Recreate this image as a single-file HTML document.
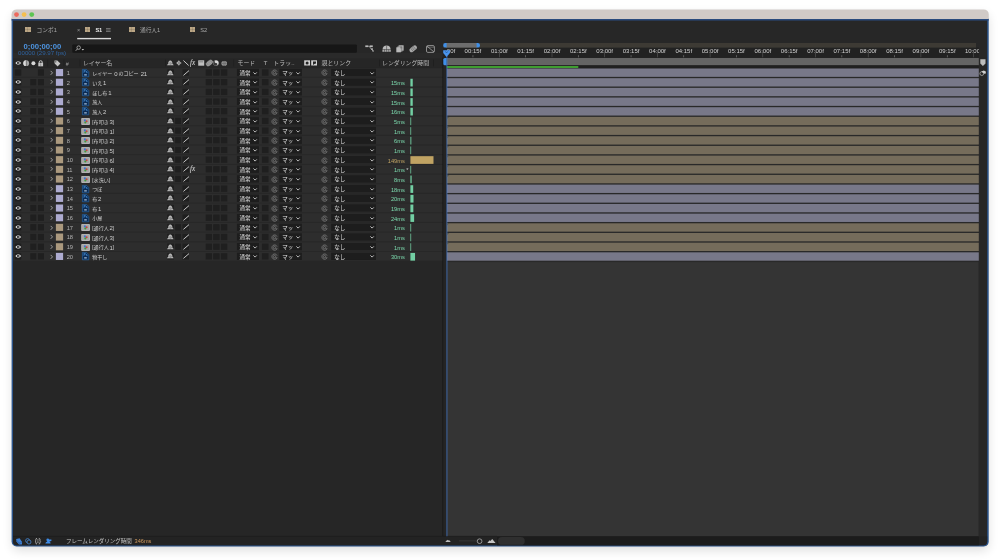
<!DOCTYPE html><html lang="ja"><head><meta charset="utf-8"><title>Timeline</title><style>html,body{margin:0;padding:0;background:#fff;width:1000px;height:560px;overflow:hidden}
body{font-family:"Liberation Sans","Noto Sans CJK JP",sans-serif;position:relative}
#frame{left:13px;top:11px;width:975px;height:535px;background:#232323;border-radius:4px;box-shadow:0 4px 11px rgba(0,0,0,.14),0 0 2px rgba(0,0,0,.18)}
#win{position:absolute;left:0;top:0;width:1000px;height:560px;will-change:transform}
#win *{position:absolute}
i{display:block}
.ic{overflow:visible}
.ly{pointer-events:none}
.t{white-space:nowrap;font-size:5.5px;line-height:9.6px;color:#c4c4c4}
.row{left:13px;width:429px;height:8.75px;background:#2d2d2d}
.bx{background:#1f1f1f}
.dd{background:#1d1d1d}
.lab{width:7.2px;height:7.1px}
.num{color:#b4b4b4;font-size:5.7px;margin-top:0.75px;letter-spacing:-0.2px}
.nm{color:#cfcfcf;font-size:5.05px;margin-top:1.1px;word-spacing:-0.2px;font-weight:400}
#win .nm b{font-weight:normal;font-size:6px;margin-left:0.8px;position:static;vertical-align:-0.4px;letter-spacing:-0.3px}
.dt{color:#e0e0e0;font-size:5.5px;margin-top:0.75px}
.rt{font-size:5.7px;margin-top:1.5px}
.rb{height:7.7px}
.lb{left:446.9px;width:531.9px;height:8.35px}
.nick{left:446.9px;width:0;height:0;border-top:2px solid #55503f;border-right:2px solid transparent}
.rl{font-size:6px;color:#d2d2d2;line-height:9.6px;margin-top:0.5px}
.sq{width:5.4px;height:5.2px;background:#bba685;background-image:linear-gradient(90deg,transparent 2.4px,rgba(0,0,0,.1) 2.4px,rgba(0,0,0,.1) 3px,transparent 3px),linear-gradient(0deg,transparent 2.3px,rgba(0,0,0,.1) 2.3px,rgba(0,0,0,.1) 2.9px,transparent 2.9px)}
.tb{font-size:5.7px;color:#a9a9a9;margin-top:0.6px}
.ta{color:#e8e8e8;font-weight:bold;letter-spacing:-0.35px}
.tc{font-size:7.7px;font-weight:bold;color:#4d94e0;line-height:10px}
.tc2{font-size:6.12px;color:#2f63a0;line-height:9.6px}
.hd{font-size:5.9px;color:#bcbcbc;margin-top:1.2px}
</style></head><body>
<svg width="0" height="0" style="position:absolute">
<defs>
<g id="eye"><path d="M0.3 3 Q3.25 -0.6 6.2 3 Q3.25 6.6 0.3 3Z" fill="#e9e9e9"/><circle cx="3.25" cy="3" r="1.25" fill="#222"/><circle cx="3.25" cy="3" r="0.5" fill="#bbb"/></g>
<g id="chev"><path d="M0.7 0.9 L2.5 2.85 L0.7 4.8" fill="none" stroke="#a2a2a2" stroke-width="0.95"/></g>
<g id="dn"><path d="M0.4 0.4 L2.1 2.1 L3.8 0.4" fill="none" stroke="#cdcdcd" stroke-width="0.9"/></g>
<g id="ps"><path d="M0.4 0.4 H4.6 L6.8 2.6 V7.8 H0.4Z" fill="#0c2c55" stroke="#2a6fb5" stroke-width="0.6"/><text x="1.5" y="4.1" font-family="Liberation Sans,sans-serif" font-weight="bold" font-size="3.4" fill="#4c97de">Ps</text><rect x="2.2" y="5.4" width="2.6" height="1" fill="#c5dcf2"/></g>
<g id="pc"><rect x="0.2" y="0.9" width="8.8" height="7.1" rx="0.9" fill="#b6b6b6"/><rect x="1.1" y="1.7" width="7" height="5.5" fill="#a6a6a6"/><circle cx="3.9" cy="3.4" r="1.05" fill="#3f74d6"/><circle cx="5.6" cy="4.3" r="1.05" fill="#c8443a"/><circle cx="4.3" cy="5.5" r="1.05" fill="#3f9d3f"/></g>
<g id="shy"><path d="M0.1 5.3 H6.5 V4.7 L5.5 4.1 Q5.3 0.5 3.3 0.4 Q1.3 0.5 1.1 4.1 L0.1 4.7Z" fill="#c2c2c2"/><path d="M3.3 2.4 V5.6 M2 3 V4.4 M4.6 3 V4.4" stroke="#444" stroke-width="0.45"/><path d="M1.6 2.2 H5" stroke="#777" stroke-width="0.4"/></g>
<g id="slash"><path d="M0.4 5.4 L6 0.6" stroke="#c4c4c4" stroke-width="1"/></g>
<g id="fx"><text x="0" y="5.2" font-family="Liberation Serif,serif" font-style="italic" font-size="7.2" fill="#e0e0e0">fx</text></g>
<g id="whip"><path d="M6.05 2.6 A2.65 2.65 0 1 0 6.1 4.5" fill="none" stroke="#8c8c8c" stroke-width="0.65"/><path d="M6.1 4.5 Q5.3 5.1 4.7 4.3" fill="none" stroke="#8c8c8c" stroke-width="0.6"/><circle cx="3.5" cy="3.6" r="1.15" fill="none" stroke="#8c8c8c" stroke-width="0.6"/></g>
</defs>
</svg>

<div id="win">
<div id="frame"></div>
<svg class="ly" width="1000" height="560" style="left:0;top:0"><path d="M11.6 18.5 H988.7 V541.4 A5 5 0 0 1 983.7 546.4 H16.6 A5 5 0 0 1 11.6 541.4Z" fill="#2c558c"/><path d="M11.6 19.1 V14.4 A5 5 0 0 1 16.6 9.4 H983.7 A5 5 0 0 1 988.7 14.4 V19.1Z" fill="#d0cac7"/><rect x="11.6" y="19.1" width="977.1" height="1.5" fill="#2a4a7c"/><path d="M13.05 20.5 H987.2 V541.6 A3.7 3.7 0 0 1 983.5 545.3 H16.75 A3.7 3.7 0 0 1 13.05 541.6Z" fill="#272727"/><circle cx="16.5" cy="14.55" r="2.4" fill="#ed6a5e"/><circle cx="24.1" cy="14.55" r="2.4" fill="#f5bf4f"/><circle cx="31.75" cy="14.55" r="2.4" fill="#5dc552"/></svg>
<svg class="ly" width="1000" height="560" style="left:0;top:0">
<rect x="13" y="52.8" width="429" height="6" fill="#2a2a2a"/>
<rect x="13" y="58.8" width="429" height="9" fill="#262626"/>
<rect x="13" y="261.6" width="429" height="274.7" fill="#262626"/>
<rect x="442.2" y="57.6" width="4.4" height="478.7" fill="#242424"/>
<rect x="442.2" y="57.6" width="1" height="478.7" fill="#1c1c1c"/>
<rect x="446.6" y="57.5" width="532.2" height="478.8" fill="#343434"/>
<rect x="978.8" y="57.5" width="8.2" height="478.8" fill="#272727"/>
<rect x="446.6" y="68" width="532.2" height="194.1" fill="#292929"/>
<rect x="443.3" y="47.6" width="535.5" height="10.2" fill="#222222"/>
<rect x="443.3" y="43" width="532.7" height="4.6" fill="#3d3a34"/>
<rect x="446" y="43" width="31" height="4.6" fill="#6d6d6d"/>
<path d="M446.6 43 V47.6 H445.4 A2.2 2.2 0 0 1 443.2 45.4 V45.2 A2.2 2.2 0 0 1 445.4 43Z" fill="#3f8fe8"/>
<path d="M476.6 43 V47.6 H477.8 A2.2 2.2 0 0 0 480 45.4 V45.2 A2.2 2.2 0 0 0 477.8 43Z" fill="#3f8fe8"/>
<rect x="446.6" y="58" width="532.2" height="7.3" fill="#646464"/>
<rect x="446.6" y="65.3" width="532.2" height="3" fill="#202020"/>
<rect x="446.8" y="66" width="131.5" height="2" fill="#3f9d31"/>
</svg>
<span class="t rl" style="left:446.80px;top:46.9px">00f</span>
<span class="t rl" style="left:457.95px;top:46.9px;width:30px;text-align:center">00:15f</span>
<svg class="ly" width="1000" height="560" style="left:0;top:0">
<rect x="472.65" y="55.2" width="0.6" height="2.1" fill="#858585"/>
</svg>
<span class="t rl" style="left:484.30px;top:46.9px;width:30px;text-align:center">01:00f</span>
<svg class="ly" width="1000" height="560" style="left:0;top:0">
<rect x="499.00" y="50.6" width="0.6" height="6.7" fill="#5c5c5c"/>
</svg>
<span class="t rl" style="left:510.65px;top:46.9px;width:30px;text-align:center">01:15f</span>
<svg class="ly" width="1000" height="560" style="left:0;top:0">
<rect x="525.35" y="55.2" width="0.6" height="2.1" fill="#858585"/>
</svg>
<span class="t rl" style="left:537.00px;top:46.9px;width:30px;text-align:center">02:00f</span>
<svg class="ly" width="1000" height="560" style="left:0;top:0">
<rect x="551.70" y="50.6" width="0.6" height="6.7" fill="#5c5c5c"/>
</svg>
<span class="t rl" style="left:563.35px;top:46.9px;width:30px;text-align:center">02:15f</span>
<svg class="ly" width="1000" height="560" style="left:0;top:0">
<rect x="578.05" y="55.2" width="0.6" height="2.1" fill="#858585"/>
</svg>
<span class="t rl" style="left:589.70px;top:46.9px;width:30px;text-align:center">03:00f</span>
<svg class="ly" width="1000" height="560" style="left:0;top:0">
<rect x="604.40" y="50.6" width="0.6" height="6.7" fill="#5c5c5c"/>
</svg>
<span class="t rl" style="left:616.05px;top:46.9px;width:30px;text-align:center">03:15f</span>
<svg class="ly" width="1000" height="560" style="left:0;top:0">
<rect x="630.75" y="55.2" width="0.6" height="2.1" fill="#858585"/>
</svg>
<span class="t rl" style="left:642.40px;top:46.9px;width:30px;text-align:center">04:00f</span>
<svg class="ly" width="1000" height="560" style="left:0;top:0">
<rect x="657.10" y="50.6" width="0.6" height="6.7" fill="#5c5c5c"/>
</svg>
<span class="t rl" style="left:668.75px;top:46.9px;width:30px;text-align:center">04:15f</span>
<svg class="ly" width="1000" height="560" style="left:0;top:0">
<rect x="683.45" y="55.2" width="0.6" height="2.1" fill="#858585"/>
</svg>
<span class="t rl" style="left:695.10px;top:46.9px;width:30px;text-align:center">05:00f</span>
<svg class="ly" width="1000" height="560" style="left:0;top:0">
<rect x="709.80" y="50.6" width="0.6" height="6.7" fill="#5c5c5c"/>
</svg>
<span class="t rl" style="left:721.45px;top:46.9px;width:30px;text-align:center">05:15f</span>
<svg class="ly" width="1000" height="560" style="left:0;top:0">
<rect x="736.15" y="55.2" width="0.6" height="2.1" fill="#858585"/>
</svg>
<span class="t rl" style="left:747.80px;top:46.9px;width:30px;text-align:center">06:00f</span>
<svg class="ly" width="1000" height="560" style="left:0;top:0">
<rect x="762.50" y="50.6" width="0.6" height="6.7" fill="#5c5c5c"/>
</svg>
<span class="t rl" style="left:774.15px;top:46.9px;width:30px;text-align:center">06:15f</span>
<svg class="ly" width="1000" height="560" style="left:0;top:0">
<rect x="788.85" y="55.2" width="0.6" height="2.1" fill="#858585"/>
</svg>
<span class="t rl" style="left:800.50px;top:46.9px;width:30px;text-align:center">07:00f</span>
<svg class="ly" width="1000" height="560" style="left:0;top:0">
<rect x="815.20" y="50.6" width="0.6" height="6.7" fill="#5c5c5c"/>
</svg>
<span class="t rl" style="left:826.85px;top:46.9px;width:30px;text-align:center">07:15f</span>
<svg class="ly" width="1000" height="560" style="left:0;top:0">
<rect x="841.55" y="55.2" width="0.6" height="2.1" fill="#858585"/>
</svg>
<span class="t rl" style="left:853.20px;top:46.9px;width:30px;text-align:center">08:00f</span>
<svg class="ly" width="1000" height="560" style="left:0;top:0">
<rect x="867.90" y="50.6" width="0.6" height="6.7" fill="#5c5c5c"/>
</svg>
<span class="t rl" style="left:879.55px;top:46.9px;width:30px;text-align:center">08:15f</span>
<svg class="ly" width="1000" height="560" style="left:0;top:0">
<rect x="894.25" y="55.2" width="0.6" height="2.1" fill="#858585"/>
</svg>
<span class="t rl" style="left:905.90px;top:46.9px;width:30px;text-align:center">09:00f</span>
<svg class="ly" width="1000" height="560" style="left:0;top:0">
<rect x="920.60" y="50.6" width="0.6" height="6.7" fill="#5c5c5c"/>
</svg>
<span class="t rl" style="left:932.25px;top:46.9px;width:30px;text-align:center">09:15f</span>
<svg class="ly" width="1000" height="560" style="left:0;top:0">
<rect x="946.95" y="55.2" width="0.6" height="2.1" fill="#858585"/>
</svg>
<span class="t rl" style="left:965.00px;top:46.9px;width:13.6px;overflow:hidden">10:00f</span>
<svg class="ly" width="1000" height="560" style="left:0;top:0">
<rect x="973.30" y="50.6" width="0.6" height="6.7" fill="#5c5c5c"/>
<path d="M13.05 536.4 H987.2 V541.6 A3.7 3.7 0 0 1 983.5 545.3 H16.75 A3.7 3.7 0 0 1 13.05 541.6Z" fill="#232323"/>
<rect x="497" y="536.4" width="481.8" height="8.9" fill="#1c1c1c"/>
<rect x="498" y="537" width="26.8" height="7.8" fill="#2f2f2f" rx="3.9"/>
<rect x="13" y="535.9" width="484" height="0.7" fill="#1b1b1b"/>
<rect x="72.3" y="44.4" width="284.6" height="8.3" fill="#161616" rx="1"/>
</svg>
<svg class="ic" style="left:74.8px;top:45.1px" width="10" height="7"><circle cx="3.7" cy="2.6" r="1.75" fill="none" stroke="#c9c9c9" stroke-width="0.7"/><path d="M2.5 3.9 L0.8 5.7" stroke="#c9c9c9" stroke-width="0.85"/><path d="M6.6 4 h2.5 l-1.25 1.5z" fill="#c9c9c9"/></svg>
<i class="sq" style="left:25.2px;top:27px"></i>
<span class="t tb" style="left:36.6px;top:25.3px">コンポ1</span>
<span class="t tb" style="left:76.9px;top:25.2px;color:#999;font-size:5.5px">×</span>
<i class="sq" style="left:84.7px;top:27px"></i>
<span class="t tb ta" style="left:95.5px;top:25.3px">S1</span>
<svg class="ic" style="left:106px;top:28.4px" width="5" height="4.4"><path d="M0 0.5h4.6M0 2h4.6M0 3.5h4.6" stroke="#8d8d8d" stroke-width="0.7"/></svg>
<svg class="ly" width="1000" height="560" style="left:0;top:0">
<rect x="77.2" y="37.9" width="33.8" height="1.4" fill="#dcdcdc"/>
</svg>
<i class="sq" style="left:129.2px;top:27px"></i>
<span class="t tb" style="left:140px;top:25.3px">通行人1</span>
<i class="sq" style="left:189.8px;top:27px"></i>
<span class="t tb" style="left:200.3px;top:25.3px">S2</span>
<span class="t tc" style="left:23.6px;top:41.5px">0;00;00;00</span>
<span class="t tc2" style="left:18.1px;top:48.3px">00000 (29.97 fps)</span>
<svg class="ic" style="left:365px;top:45.4px" width="9.4" height="7.4"><rect x="0.3" y="0.4" width="2.8" height="1.7" fill="#b9b9b9"/><rect x="5" y="0.4" width="2.8" height="1.7" fill="#b9b9b9"/><path d="M3 1.2H5M4 1.2 L6.4 4.2 H7 M6.6 4.3 L8 6" stroke="#b9b9b9" stroke-width="0.7" fill="none"/><rect x="6.2" y="3.4" width="1.8" height="1.4" fill="#b9b9b9"/><rect x="7.4" y="5.4" width="1.4" height="1.2" fill="#b9b9b9"/></svg>
<svg class="ic" style="left:382px;top:45.4px" width="9.4" height="7.4"><path d="M0.5 4.4 Q0.8 0.7 4.6 0.5 Q8.4 0.7 8.7 4.4Z" fill="#b9b9b9"/><path d="M0.4 4.9 H8.8 V6.8 H0.4Z" fill="#a8a8a8"/><path d="M4.6 0.6V6.8M2.5 4.4V6.8M6.7 4.4V6.8" stroke="#333" stroke-width="0.5"/></svg>
<svg class="ic" style="left:396px;top:45.4px" width="8" height="7.6"><rect x="2.6" y="0.3" width="5" height="5.4" fill="#bcbcbc"/><rect x="1.4" y="1.3" width="5" height="5.4" fill="#8f8f8f"/><rect x="0.3" y="2.3" width="4.6" height="5" fill="#b9b9b9"/><rect x="4.4" y="1.6" width="1.8" height="1.8" fill="#777"/></svg>
<svg class="ic" style="left:409px;top:45.4px" width="8.4" height="7.6"><g transform="rotate(-38 4.2 3.8)"><rect x="0" y="1.6" width="8.4" height="4.4" rx="2.2" fill="#a8a8a8"/><path d="M2.6 1.6V6M4.2 1.6V6M5.8 1.6V6" stroke="#555" stroke-width="0.5"/></g></svg>
<svg class="ic" style="left:426.2px;top:45px" width="9.4" height="8"><rect x="0.5" y="0.6" width="7.9" height="6.8" rx="1.3" fill="none" stroke="#9a9a9a" stroke-width="0.9"/><path d="M1 1.1 L8 7" stroke="#9a9a9a" stroke-width="0.9"/><path d="M1 2.2H8" stroke="#9a9a9a" stroke-width="0.5"/></svg>
<svg class="ic" style="left:15.3px;top:60.0px" width="6.5" height="6"><use href="#eye"/></svg>
<svg class="ic" style="left:22.6px;top:60.0px" width="6.5" height="6.4"><circle cx="3.2" cy="3.2" r="2.9" fill="#a5a5a5"/><path d="M3.2 0.3 A2.9 2.9 0 0 0 3.2 6.1Z" fill="#dadada"/><path d="M3.3 0.4V6" stroke="#555" stroke-width="0.7"/></svg>
<svg class="ic" style="left:30.8px;top:60.0px" width="5" height="6.4"><circle cx="2.4" cy="3.3" r="2" fill="#d6d6d6"/></svg>
<svg class="ic" style="left:38.3px;top:59.8px" width="6" height="7"><rect x="0.3" y="2.8" width="4.8" height="3.5" fill="#c6c6c6"/><path d="M1.2 3V2.2Q1.2 0.7 2.7 0.7Q4.2 0.7 4.2 2.2V3" fill="none" stroke="#c6c6c6" stroke-width="1"/><path d="M2.7 3.4V6" stroke="#666" stroke-width="0.5"/></svg>
<svg class="ic" style="left:53.8px;top:59.7px" width="7.6" height="7.6"><path d="M0.5 0.5 H3.3 L6.4 3.6 L3.6 6.4 L0.5 3.3Z" fill="#c6c6c6"/><circle cx="1.8" cy="1.8" r="0.6" fill="#262626"/></svg>
<span class="t hd" style="left:65.8px;top:58.4px;font-style:italic;font-size:5.2px;color:#9f9f9f">#</span>
<span class="t hd" style="left:82.9px;top:58.3px">レイヤー名</span>
<svg class="ly" width="1000" height="560" style="left:0;top:0">
<rect x="47.4" y="59.6" width="0.7" height="6.8" fill="#1e1e1e"/>
<rect x="63.6" y="59.6" width="0.7" height="6.8" fill="#1e1e1e"/>
<rect x="79.6" y="59.6" width="0.7" height="6.8" fill="#1e1e1e"/>
<rect x="165.2" y="59.6" width="0.7" height="6.8" fill="#1e1e1e"/>
<rect x="233.4" y="59.6" width="0.7" height="6.8" fill="#1e1e1e"/>
<rect x="379.2" y="59.6" width="0.7" height="6.8" fill="#1e1e1e"/>
<rect x="433.2" y="59.6" width="0.7" height="6.8" fill="#1e1e1e"/>
</svg>
<svg class="ic" style="left:167.3px;top:60.0px" width="6.6" height="6"><use href="#shy"/></svg>
<svg class="ic" style="left:175.5px;top:60.0px" width="5.6" height="6"><path d="M2.8 0.4V5.6M0.2 3H5.4" stroke="#cfcfcf" stroke-width="0.6"/><circle cx="2.8" cy="3" r="1.5" fill="none" stroke="#cfcfcf" stroke-width="0.7"/></svg>
<svg class="ic" style="left:182.5px;top:60.0px" width="6.4" height="6"><path d="M0.4 0.5 L5.7 5.5" stroke="#c4c4c4" stroke-width="1"/></svg>
<svg class="ic" style="left:190.3px;top:60.0px" width="6.4" height="6"><use href="#fx"/></svg>
<svg class="ic" style="left:197.6px;top:60.0px" width="6.6" height="6"><rect x="0.2" y="0.3" width="6" height="5.4" fill="#bfbfbf"/><rect x="1.2" y="1.2" width="4" height="1.2" fill="#8a8a8a"/></svg>
<svg class="ic" style="left:205.5px;top:60.0px" width="6.8" height="6"><g transform="rotate(-38 3.4 3)"><rect x="-0.2" y="1" width="7.2" height="4" rx="2" fill="#8c8c8c" stroke="#b5b5b5" stroke-width="0.5"/><path d="M2.2 1V5M3.4 1V5M4.6 1V5" stroke="#b0b0b0" stroke-width="0.4"/></g></svg>
<svg class="ic" style="left:213.2px;top:60.0px" width="6" height="6"><circle cx="3" cy="3" r="2.7" fill="#d6d6d6"/><path d="M3 0.3 A2.7 2.7 0 0 0 3 5.7 A1.35 1.35 0 0 0 3 3 A1.35 1.35 0 0 1 3 0.3" fill="#3a3a3a"/></svg>
<svg class="ic" style="left:220.8px;top:60.0px" width="6" height="6"><ellipse cx="3.2" cy="3.4" rx="2.8" ry="2.3" fill="#a2a2a2"/><path d="M0.4 3.4H6M3.2 1.1V5.7" stroke="#505050" stroke-width="0.45"/><ellipse cx="3.2" cy="3.4" rx="1.3" ry="2.3" fill="none" stroke="#505050" stroke-width="0.4"/></svg>
<span class="t hd" style="left:237.6px;top:58.3px">モード</span>
<span class="t hd" style="left:263.3px;top:58.3px;font-size:5.8px;font-weight:bold;margin-left:0.4px;color:#909090">T</span>
<span class="t hd" style="left:273.2px;top:58.3px;letter-spacing:0.15px">トラッ..</span>
<svg class="ic" style="left:304px;top:60.0px" width="6.2" height="6"><rect x="0.2" y="0.3" width="5.8" height="5.2" fill="#d2d2d2"/><circle cx="3.1" cy="2.9" r="1.5" fill="#262626"/></svg>
<svg class="ic" style="left:311.4px;top:60.0px" width="6.2" height="6"><rect x="0.2" y="0.3" width="5.8" height="5.2" fill="#d2d2d2"/><path d="M2 1.6H5V3.4Q3.2 3.4 2 5Z" fill="#262626"/></svg>
<span class="t hd" style="left:321.6px;top:58.3px">親とリンク</span>
<span class="t hd" style="left:382px;top:58.3px">レンダリング時間</span>
<svg class="ic" style="left:16px;top:537.6px" width="6.4" height="6.8"><path d="M0.2 0.9 L3.6 0.3 L6.1 3.9 L5.9 6.5 L2.9 6.6 L0.4 3.5Z" fill="#3e80d4"/><path d="M0.6 2.2 L3.2 5 L5.8 4.4 M3.2 5 V6.4" stroke="#24508c" stroke-width="0.5" fill="none"/></svg>
<svg class="ic" style="left:25.4px;top:537.6px" width="6.8" height="6.4"><circle cx="2.6" cy="2.6" r="2" fill="none" stroke="#4a90e2" stroke-width="0.7"/><circle cx="4" cy="4" r="2" fill="#232323" stroke="#4a90e2" stroke-width="0.7"/></svg>
<svg class="ic" style="left:35.2px;top:537.8000000000001px" width="5.8" height="6.4"><path d="M2 0.4 Q0.8 0.4 0.8 1.6 V2.6 L0.2 3.2 L0.8 3.8 V4.8 Q0.8 6 2 6 M3.8 0.4 Q5 0.4 5 1.6 V2.6 L5.6 3.2 L5 3.8 V4.8 Q5 6 3.8 6" fill="none" stroke="#c9c9c9" stroke-width="0.8"/><path d="M2.2 1.8H3.6M2.2 3.2H3.6M2.2 4.6H3.6" stroke="#c9c9c9" stroke-width="0.6"/></svg>
<svg class="ic" style="left:44.8px;top:537.6px" width="6.8" height="6.4"><path d="M0.4 5.6 Q0.4 3.6 2.4 3.4 Q1.4 2.8 1.4 1.8 Q1.4 0.5 2.8 0.5 Q4 0.5 4.1 1.6 L6.4 1.4 V3 L4.2 3.4 Q5.6 3.8 5.6 5.6Z" fill="#3e8be6"/></svg>
<span class="t" style="left:66px;top:537px;font-size:5.5px;color:#c4c4c4">フレームレンダリング時間</span>
<span class="t" style="left:134.6px;top:537px;font-size:5.6px;color:#cf9a60">346ms</span>
<svg class="ic" style="left:444.8px;top:538.2px" width="7" height="5"><path d="M0.3 3.9 L2.3 1.7 L3.2 2.6 L4 1.9 L5.8 3.9Z" fill="#bdbdbd"/></svg>
<svg class="ly" width="1000" height="560" style="left:0;top:0">
<rect x="459" y="540.5" width="19" height="0.8" fill="#3a3a3a"/>
<circle cx="479.6" cy="541.2" r="2.35" fill="#232323" stroke="#c0c0c0" stroke-width="0.7"/>
</svg>
<svg class="ic" style="left:486.6px;top:538.2px" width="9" height="6"><path d="M0.3 5 L2.6 2.2 L3.4 3.1 L5.2 1 L8.6 5Z" fill="#c4c4c4"/></svg>
<svg class="ic" style="left:980.4px;top:59px" width="6" height="8"><path d="M0.3 0.3 H5.5 V4.6 L2.9 7 L0.3 4.6Z" fill="#bdbdbd"/></svg>
<svg class="ic" style="left:979.4px;top:69.6px" width="7.6" height="6.4"><circle cx="2.8" cy="3.6" r="1.9" fill="none" stroke="#bdbdbd" stroke-width="0.7"/><path d="M2.4 1.4 L4.8 0.6 L6.8 1.6 V3.6 L5 3.8Z" fill="#cfcfcf"/></svg>
<svg class="ly" width="1000" height="560" style="left:0;top:0">
<rect x="13.05" y="68.10" width="429.20" height="8.75" fill="#2d2d2d"/>
<rect x="14.75" y="69.40" width="6.50" height="6.30" fill="#1f1f1f"/>
<rect x="37.90" y="69.40" width="6.10" height="6.30" fill="#1f1f1f"/>
<rect x="55.90" y="69.05" width="7.20" height="7.10" fill="#adabd0"/>
<rect x="167.30" y="69.40" width="6.60" height="6.30" fill="#1f1f1f"/>
<rect x="182.50" y="69.40" width="6.40" height="6.30" fill="#1f1f1f"/>
<rect x="205.70" y="69.40" width="6.30" height="6.30" fill="#1f1f1f"/>
<rect x="213.20" y="69.40" width="6.40" height="6.30" fill="#1f1f1f"/>
<rect x="220.80" y="69.40" width="6.50" height="6.30" fill="#1f1f1f"/>
<rect x="236.90" y="68.85" width="22.10" height="7.30" fill="#1d1d1d"/>
<rect x="261.90" y="69.40" width="6.60" height="6.30" fill="#1f1f1f"/>
<rect x="279.30" y="68.85" width="22.60" height="7.30" fill="#1d1d1d"/>
<rect x="331.20" y="68.85" width="44.80" height="7.30" fill="#1d1d1d"/>
<rect x="446.90" y="68.50" width="531.90" height="8.35" fill="#787889"/>
<rect x="13.05" y="77.77" width="429.20" height="8.75" fill="#2d2d2d"/>
<rect x="14.75" y="79.07" width="6.50" height="6.30" fill="#1f1f1f"/>
<rect x="30.25" y="79.07" width="6.10" height="6.30" fill="#1f1f1f"/>
<rect x="37.90" y="79.07" width="6.10" height="6.30" fill="#1f1f1f"/>
<rect x="55.90" y="78.72" width="7.20" height="7.10" fill="#adabd0"/>
<rect x="167.30" y="79.07" width="6.60" height="6.30" fill="#1f1f1f"/>
<rect x="182.50" y="79.07" width="6.40" height="6.30" fill="#1f1f1f"/>
<rect x="205.70" y="79.07" width="6.30" height="6.30" fill="#1f1f1f"/>
<rect x="213.20" y="79.07" width="6.40" height="6.30" fill="#1f1f1f"/>
<rect x="220.80" y="79.07" width="6.50" height="6.30" fill="#1f1f1f"/>
<rect x="236.90" y="78.52" width="22.10" height="7.30" fill="#1d1d1d"/>
<rect x="261.90" y="79.07" width="6.60" height="6.30" fill="#1f1f1f"/>
<rect x="279.30" y="78.52" width="22.60" height="7.30" fill="#1d1d1d"/>
<rect x="331.20" y="78.52" width="44.80" height="7.30" fill="#1d1d1d"/>
<rect x="410.40" y="78.77" width="2.33" height="7.70" fill="#72cfa3"/>
<rect x="446.90" y="78.17" width="531.90" height="8.35" fill="#787889"/>
<rect x="13.05" y="87.45" width="429.20" height="8.75" fill="#2d2d2d"/>
<rect x="14.75" y="88.75" width="6.50" height="6.30" fill="#1f1f1f"/>
<rect x="30.25" y="88.75" width="6.10" height="6.30" fill="#1f1f1f"/>
<rect x="37.90" y="88.75" width="6.10" height="6.30" fill="#1f1f1f"/>
<rect x="55.90" y="88.40" width="7.20" height="7.10" fill="#adabd0"/>
<rect x="167.30" y="88.75" width="6.60" height="6.30" fill="#1f1f1f"/>
<rect x="182.50" y="88.75" width="6.40" height="6.30" fill="#1f1f1f"/>
<rect x="205.70" y="88.75" width="6.30" height="6.30" fill="#1f1f1f"/>
<rect x="213.20" y="88.75" width="6.40" height="6.30" fill="#1f1f1f"/>
<rect x="220.80" y="88.75" width="6.50" height="6.30" fill="#1f1f1f"/>
<rect x="236.90" y="88.20" width="22.10" height="7.30" fill="#1d1d1d"/>
<rect x="261.90" y="88.75" width="6.60" height="6.30" fill="#1f1f1f"/>
<rect x="279.30" y="88.20" width="22.60" height="7.30" fill="#1d1d1d"/>
<rect x="331.20" y="88.20" width="44.80" height="7.30" fill="#1d1d1d"/>
<rect x="410.40" y="88.45" width="2.33" height="7.70" fill="#72cfa3"/>
<rect x="446.90" y="87.85" width="531.90" height="8.35" fill="#787889"/>
<rect x="13.05" y="97.12" width="429.20" height="8.75" fill="#2d2d2d"/>
<rect x="14.75" y="98.42" width="6.50" height="6.30" fill="#1f1f1f"/>
<rect x="30.25" y="98.42" width="6.10" height="6.30" fill="#1f1f1f"/>
<rect x="37.90" y="98.42" width="6.10" height="6.30" fill="#1f1f1f"/>
<rect x="55.90" y="98.08" width="7.20" height="7.10" fill="#adabd0"/>
<rect x="167.30" y="98.42" width="6.60" height="6.30" fill="#1f1f1f"/>
<rect x="182.50" y="98.42" width="6.40" height="6.30" fill="#1f1f1f"/>
<rect x="205.70" y="98.42" width="6.30" height="6.30" fill="#1f1f1f"/>
<rect x="213.20" y="98.42" width="6.40" height="6.30" fill="#1f1f1f"/>
<rect x="220.80" y="98.42" width="6.50" height="6.30" fill="#1f1f1f"/>
<rect x="236.90" y="97.88" width="22.10" height="7.30" fill="#1d1d1d"/>
<rect x="261.90" y="98.42" width="6.60" height="6.30" fill="#1f1f1f"/>
<rect x="279.30" y="97.88" width="22.60" height="7.30" fill="#1d1d1d"/>
<rect x="331.20" y="97.88" width="44.80" height="7.30" fill="#1d1d1d"/>
<rect x="410.40" y="98.12" width="2.33" height="7.70" fill="#72cfa3"/>
<rect x="446.90" y="97.53" width="531.90" height="8.35" fill="#787889"/>
<rect x="13.05" y="106.80" width="429.20" height="8.75" fill="#2d2d2d"/>
<rect x="14.75" y="108.10" width="6.50" height="6.30" fill="#1f1f1f"/>
<rect x="30.25" y="108.10" width="6.10" height="6.30" fill="#1f1f1f"/>
<rect x="37.90" y="108.10" width="6.10" height="6.30" fill="#1f1f1f"/>
<rect x="55.90" y="107.75" width="7.20" height="7.10" fill="#adabd0"/>
<rect x="167.30" y="108.10" width="6.60" height="6.30" fill="#1f1f1f"/>
<rect x="182.50" y="108.10" width="6.40" height="6.30" fill="#1f1f1f"/>
<rect x="205.70" y="108.10" width="6.30" height="6.30" fill="#1f1f1f"/>
<rect x="213.20" y="108.10" width="6.40" height="6.30" fill="#1f1f1f"/>
<rect x="220.80" y="108.10" width="6.50" height="6.30" fill="#1f1f1f"/>
<rect x="236.90" y="107.55" width="22.10" height="7.30" fill="#1d1d1d"/>
<rect x="261.90" y="108.10" width="6.60" height="6.30" fill="#1f1f1f"/>
<rect x="279.30" y="107.55" width="22.60" height="7.30" fill="#1d1d1d"/>
<rect x="331.20" y="107.55" width="44.80" height="7.30" fill="#1d1d1d"/>
<rect x="410.40" y="107.80" width="2.48" height="7.70" fill="#72cfa3"/>
<rect x="446.90" y="107.20" width="531.90" height="8.35" fill="#787889"/>
<rect x="13.05" y="116.47" width="429.20" height="8.75" fill="#2d2d2d"/>
<rect x="14.75" y="117.77" width="6.50" height="6.30" fill="#1f1f1f"/>
<rect x="30.25" y="117.77" width="6.10" height="6.30" fill="#1f1f1f"/>
<rect x="37.90" y="117.77" width="6.10" height="6.30" fill="#1f1f1f"/>
<rect x="55.90" y="117.42" width="7.20" height="7.10" fill="#ab997e"/>
<rect x="167.30" y="117.77" width="6.60" height="6.30" fill="#1f1f1f"/>
<rect x="175.20" y="117.77" width="5.80" height="6.30" fill="#1f1f1f"/>
<rect x="182.50" y="117.77" width="6.40" height="6.30" fill="#1f1f1f"/>
<rect x="205.70" y="117.77" width="6.30" height="6.30" fill="#1f1f1f"/>
<rect x="213.20" y="117.77" width="6.40" height="6.30" fill="#1f1f1f"/>
<rect x="220.80" y="117.77" width="6.50" height="6.30" fill="#1f1f1f"/>
<rect x="236.90" y="117.22" width="22.10" height="7.30" fill="#1d1d1d"/>
<rect x="261.90" y="117.77" width="6.60" height="6.30" fill="#1f1f1f"/>
<rect x="279.30" y="117.22" width="22.60" height="7.30" fill="#1d1d1d"/>
<rect x="331.20" y="117.22" width="44.80" height="7.30" fill="#1d1d1d"/>
<rect x="410.40" y="117.47" width="0.78" height="7.70" fill="#72cfa3"/>
<rect x="446.90" y="116.88" width="531.90" height="8.35" fill="#756c5b"/>
<path d="M446.9 116.88 h2.2 l-2.2 2.2z" fill="#55503f"/>
<rect x="13.05" y="126.15" width="429.20" height="8.75" fill="#2d2d2d"/>
<rect x="14.75" y="127.45" width="6.50" height="6.30" fill="#1f1f1f"/>
<rect x="30.25" y="127.45" width="6.10" height="6.30" fill="#1f1f1f"/>
<rect x="37.90" y="127.45" width="6.10" height="6.30" fill="#1f1f1f"/>
<rect x="55.90" y="127.10" width="7.20" height="7.10" fill="#ab997e"/>
<rect x="167.30" y="127.45" width="6.60" height="6.30" fill="#1f1f1f"/>
<rect x="175.20" y="127.45" width="5.80" height="6.30" fill="#1f1f1f"/>
<rect x="182.50" y="127.45" width="6.40" height="6.30" fill="#1f1f1f"/>
<rect x="205.70" y="127.45" width="6.30" height="6.30" fill="#1f1f1f"/>
<rect x="213.20" y="127.45" width="6.40" height="6.30" fill="#1f1f1f"/>
<rect x="220.80" y="127.45" width="6.50" height="6.30" fill="#1f1f1f"/>
<rect x="236.90" y="126.90" width="22.10" height="7.30" fill="#1d1d1d"/>
<rect x="261.90" y="127.45" width="6.60" height="6.30" fill="#1f1f1f"/>
<rect x="279.30" y="126.90" width="22.60" height="7.30" fill="#1d1d1d"/>
<rect x="331.20" y="126.90" width="44.80" height="7.30" fill="#1d1d1d"/>
<rect x="410.40" y="127.15" width="0.75" height="7.70" fill="#72cfa3"/>
<rect x="446.90" y="126.55" width="531.90" height="8.35" fill="#756c5b"/>
<path d="M446.9 126.55 h2.2 l-2.2 2.2z" fill="#55503f"/>
<rect x="13.05" y="135.82" width="429.20" height="8.75" fill="#2d2d2d"/>
<rect x="14.75" y="137.12" width="6.50" height="6.30" fill="#1f1f1f"/>
<rect x="30.25" y="137.12" width="6.10" height="6.30" fill="#1f1f1f"/>
<rect x="37.90" y="137.12" width="6.10" height="6.30" fill="#1f1f1f"/>
<rect x="55.90" y="136.77" width="7.20" height="7.10" fill="#ab997e"/>
<rect x="167.30" y="137.12" width="6.60" height="6.30" fill="#1f1f1f"/>
<rect x="175.20" y="137.12" width="5.80" height="6.30" fill="#1f1f1f"/>
<rect x="182.50" y="137.12" width="6.40" height="6.30" fill="#1f1f1f"/>
<rect x="205.70" y="137.12" width="6.30" height="6.30" fill="#1f1f1f"/>
<rect x="213.20" y="137.12" width="6.40" height="6.30" fill="#1f1f1f"/>
<rect x="220.80" y="137.12" width="6.50" height="6.30" fill="#1f1f1f"/>
<rect x="236.90" y="136.57" width="22.10" height="7.30" fill="#1d1d1d"/>
<rect x="261.90" y="137.12" width="6.60" height="6.30" fill="#1f1f1f"/>
<rect x="279.30" y="136.57" width="22.60" height="7.30" fill="#1d1d1d"/>
<rect x="331.20" y="136.57" width="44.80" height="7.30" fill="#1d1d1d"/>
<rect x="410.40" y="136.82" width="0.93" height="7.70" fill="#72cfa3"/>
<rect x="446.90" y="136.22" width="531.90" height="8.35" fill="#756c5b"/>
<path d="M446.9 136.22 h2.2 l-2.2 2.2z" fill="#55503f"/>
<rect x="13.05" y="145.50" width="429.20" height="8.75" fill="#2d2d2d"/>
<rect x="14.75" y="146.80" width="6.50" height="6.30" fill="#1f1f1f"/>
<rect x="30.25" y="146.80" width="6.10" height="6.30" fill="#1f1f1f"/>
<rect x="37.90" y="146.80" width="6.10" height="6.30" fill="#1f1f1f"/>
<rect x="55.90" y="146.45" width="7.20" height="7.10" fill="#ab997e"/>
<rect x="167.30" y="146.80" width="6.60" height="6.30" fill="#1f1f1f"/>
<rect x="175.20" y="146.80" width="5.80" height="6.30" fill="#1f1f1f"/>
<rect x="182.50" y="146.80" width="6.40" height="6.30" fill="#1f1f1f"/>
<rect x="205.70" y="146.80" width="6.30" height="6.30" fill="#1f1f1f"/>
<rect x="213.20" y="146.80" width="6.40" height="6.30" fill="#1f1f1f"/>
<rect x="220.80" y="146.80" width="6.50" height="6.30" fill="#1f1f1f"/>
<rect x="236.90" y="146.25" width="22.10" height="7.30" fill="#1d1d1d"/>
<rect x="261.90" y="146.80" width="6.60" height="6.30" fill="#1f1f1f"/>
<rect x="279.30" y="146.25" width="22.60" height="7.30" fill="#1d1d1d"/>
<rect x="331.20" y="146.25" width="44.80" height="7.30" fill="#1d1d1d"/>
<rect x="410.40" y="146.50" width="0.75" height="7.70" fill="#72cfa3"/>
<rect x="446.90" y="145.90" width="531.90" height="8.35" fill="#756c5b"/>
<path d="M446.9 145.90 h2.2 l-2.2 2.2z" fill="#55503f"/>
<rect x="13.05" y="155.18" width="429.20" height="8.75" fill="#2d2d2d"/>
<rect x="14.75" y="156.48" width="6.50" height="6.30" fill="#1f1f1f"/>
<rect x="30.25" y="156.48" width="6.10" height="6.30" fill="#1f1f1f"/>
<rect x="37.90" y="156.48" width="6.10" height="6.30" fill="#1f1f1f"/>
<rect x="55.90" y="156.12" width="7.20" height="7.10" fill="#ab997e"/>
<rect x="167.30" y="156.48" width="6.60" height="6.30" fill="#1f1f1f"/>
<rect x="175.20" y="156.48" width="5.80" height="6.30" fill="#1f1f1f"/>
<rect x="182.50" y="156.48" width="6.40" height="6.30" fill="#1f1f1f"/>
<rect x="205.70" y="156.48" width="6.30" height="6.30" fill="#1f1f1f"/>
<rect x="213.20" y="156.48" width="6.40" height="6.30" fill="#1f1f1f"/>
<rect x="220.80" y="156.48" width="6.50" height="6.30" fill="#1f1f1f"/>
<rect x="236.90" y="155.93" width="22.10" height="7.30" fill="#1d1d1d"/>
<rect x="261.90" y="156.48" width="6.60" height="6.30" fill="#1f1f1f"/>
<rect x="279.30" y="155.93" width="22.60" height="7.30" fill="#1d1d1d"/>
<rect x="331.20" y="155.93" width="44.80" height="7.30" fill="#1d1d1d"/>
<rect x="410.40" y="156.18" width="23.09" height="7.70" fill="#c0a363"/>
<rect x="446.90" y="155.58" width="531.90" height="8.35" fill="#756c5b"/>
<path d="M446.9 155.58 h2.2 l-2.2 2.2z" fill="#55503f"/>
<rect x="13.05" y="164.85" width="429.20" height="8.75" fill="#2d2d2d"/>
<rect x="14.75" y="166.15" width="6.50" height="6.30" fill="#1f1f1f"/>
<rect x="30.25" y="166.15" width="6.10" height="6.30" fill="#1f1f1f"/>
<rect x="37.90" y="166.15" width="6.10" height="6.30" fill="#1f1f1f"/>
<rect x="55.90" y="165.80" width="7.20" height="7.10" fill="#ab997e"/>
<rect x="167.30" y="166.15" width="6.60" height="6.30" fill="#1f1f1f"/>
<rect x="175.20" y="166.15" width="5.80" height="6.30" fill="#1f1f1f"/>
<rect x="182.50" y="166.15" width="6.40" height="6.30" fill="#1f1f1f"/>
<rect x="205.70" y="166.15" width="6.30" height="6.30" fill="#1f1f1f"/>
<rect x="213.20" y="166.15" width="6.40" height="6.30" fill="#1f1f1f"/>
<rect x="220.80" y="166.15" width="6.50" height="6.30" fill="#1f1f1f"/>
<rect x="236.90" y="165.60" width="22.10" height="7.30" fill="#1d1d1d"/>
<rect x="261.90" y="166.15" width="6.60" height="6.30" fill="#1f1f1f"/>
<rect x="279.30" y="165.60" width="22.60" height="7.30" fill="#1d1d1d"/>
<rect x="331.20" y="165.60" width="44.80" height="7.30" fill="#1d1d1d"/>
<rect x="410.40" y="165.85" width="0.75" height="7.70" fill="#72cfa3"/>
<rect x="446.90" y="165.25" width="531.90" height="8.35" fill="#756c5b"/>
<path d="M446.9 165.25 h2.2 l-2.2 2.2z" fill="#55503f"/>
<rect x="13.05" y="174.53" width="429.20" height="8.75" fill="#2d2d2d"/>
<rect x="14.75" y="175.83" width="6.50" height="6.30" fill="#1f1f1f"/>
<rect x="30.25" y="175.83" width="6.10" height="6.30" fill="#1f1f1f"/>
<rect x="37.90" y="175.83" width="6.10" height="6.30" fill="#1f1f1f"/>
<rect x="55.90" y="175.47" width="7.20" height="7.10" fill="#ab997e"/>
<rect x="167.30" y="175.83" width="6.60" height="6.30" fill="#1f1f1f"/>
<rect x="175.20" y="175.83" width="5.80" height="6.30" fill="#1f1f1f"/>
<rect x="182.50" y="175.83" width="6.40" height="6.30" fill="#1f1f1f"/>
<rect x="205.70" y="175.83" width="6.30" height="6.30" fill="#1f1f1f"/>
<rect x="213.20" y="175.83" width="6.40" height="6.30" fill="#1f1f1f"/>
<rect x="220.80" y="175.83" width="6.50" height="6.30" fill="#1f1f1f"/>
<rect x="236.90" y="175.28" width="22.10" height="7.30" fill="#1d1d1d"/>
<rect x="261.90" y="175.83" width="6.60" height="6.30" fill="#1f1f1f"/>
<rect x="279.30" y="175.28" width="22.60" height="7.30" fill="#1d1d1d"/>
<rect x="331.20" y="175.28" width="44.80" height="7.30" fill="#1d1d1d"/>
<rect x="410.40" y="175.53" width="1.24" height="7.70" fill="#72cfa3"/>
<rect x="446.90" y="174.93" width="531.90" height="8.35" fill="#756c5b"/>
<path d="M446.9 174.93 h2.2 l-2.2 2.2z" fill="#55503f"/>
<rect x="13.05" y="184.20" width="429.20" height="8.75" fill="#2d2d2d"/>
<rect x="14.75" y="185.50" width="6.50" height="6.30" fill="#1f1f1f"/>
<rect x="30.25" y="185.50" width="6.10" height="6.30" fill="#1f1f1f"/>
<rect x="37.90" y="185.50" width="6.10" height="6.30" fill="#1f1f1f"/>
<rect x="55.90" y="185.15" width="7.20" height="7.10" fill="#adabd0"/>
<rect x="167.30" y="185.50" width="6.60" height="6.30" fill="#1f1f1f"/>
<rect x="182.50" y="185.50" width="6.40" height="6.30" fill="#1f1f1f"/>
<rect x="205.70" y="185.50" width="6.30" height="6.30" fill="#1f1f1f"/>
<rect x="213.20" y="185.50" width="6.40" height="6.30" fill="#1f1f1f"/>
<rect x="220.80" y="185.50" width="6.50" height="6.30" fill="#1f1f1f"/>
<rect x="236.90" y="184.95" width="22.10" height="7.30" fill="#1d1d1d"/>
<rect x="261.90" y="185.50" width="6.60" height="6.30" fill="#1f1f1f"/>
<rect x="279.30" y="184.95" width="22.60" height="7.30" fill="#1d1d1d"/>
<rect x="331.20" y="184.95" width="44.80" height="7.30" fill="#1d1d1d"/>
<rect x="410.40" y="185.20" width="2.79" height="7.70" fill="#72cfa3"/>
<rect x="446.90" y="184.60" width="531.90" height="8.35" fill="#787889"/>
<rect x="13.05" y="193.88" width="429.20" height="8.75" fill="#2d2d2d"/>
<rect x="14.75" y="195.18" width="6.50" height="6.30" fill="#1f1f1f"/>
<rect x="30.25" y="195.18" width="6.10" height="6.30" fill="#1f1f1f"/>
<rect x="37.90" y="195.18" width="6.10" height="6.30" fill="#1f1f1f"/>
<rect x="55.90" y="194.82" width="7.20" height="7.10" fill="#adabd0"/>
<rect x="167.30" y="195.18" width="6.60" height="6.30" fill="#1f1f1f"/>
<rect x="182.50" y="195.18" width="6.40" height="6.30" fill="#1f1f1f"/>
<rect x="205.70" y="195.18" width="6.30" height="6.30" fill="#1f1f1f"/>
<rect x="213.20" y="195.18" width="6.40" height="6.30" fill="#1f1f1f"/>
<rect x="220.80" y="195.18" width="6.50" height="6.30" fill="#1f1f1f"/>
<rect x="236.90" y="194.62" width="22.10" height="7.30" fill="#1d1d1d"/>
<rect x="261.90" y="195.18" width="6.60" height="6.30" fill="#1f1f1f"/>
<rect x="279.30" y="194.62" width="22.60" height="7.30" fill="#1d1d1d"/>
<rect x="331.20" y="194.62" width="44.80" height="7.30" fill="#1d1d1d"/>
<rect x="410.40" y="194.88" width="3.10" height="7.70" fill="#72cfa3"/>
<rect x="446.90" y="194.28" width="531.90" height="8.35" fill="#787889"/>
<rect x="13.05" y="203.55" width="429.20" height="8.75" fill="#2d2d2d"/>
<rect x="14.75" y="204.85" width="6.50" height="6.30" fill="#1f1f1f"/>
<rect x="30.25" y="204.85" width="6.10" height="6.30" fill="#1f1f1f"/>
<rect x="37.90" y="204.85" width="6.10" height="6.30" fill="#1f1f1f"/>
<rect x="55.90" y="204.50" width="7.20" height="7.10" fill="#adabd0"/>
<rect x="167.30" y="204.85" width="6.60" height="6.30" fill="#1f1f1f"/>
<rect x="182.50" y="204.85" width="6.40" height="6.30" fill="#1f1f1f"/>
<rect x="205.70" y="204.85" width="6.30" height="6.30" fill="#1f1f1f"/>
<rect x="213.20" y="204.85" width="6.40" height="6.30" fill="#1f1f1f"/>
<rect x="220.80" y="204.85" width="6.50" height="6.30" fill="#1f1f1f"/>
<rect x="236.90" y="204.30" width="22.10" height="7.30" fill="#1d1d1d"/>
<rect x="261.90" y="204.85" width="6.60" height="6.30" fill="#1f1f1f"/>
<rect x="279.30" y="204.30" width="22.60" height="7.30" fill="#1d1d1d"/>
<rect x="331.20" y="204.30" width="44.80" height="7.30" fill="#1d1d1d"/>
<rect x="410.40" y="204.55" width="2.94" height="7.70" fill="#72cfa3"/>
<rect x="446.90" y="203.95" width="531.90" height="8.35" fill="#787889"/>
<rect x="13.05" y="213.22" width="429.20" height="8.75" fill="#2d2d2d"/>
<rect x="14.75" y="214.53" width="6.50" height="6.30" fill="#1f1f1f"/>
<rect x="30.25" y="214.53" width="6.10" height="6.30" fill="#1f1f1f"/>
<rect x="37.90" y="214.53" width="6.10" height="6.30" fill="#1f1f1f"/>
<rect x="55.90" y="214.17" width="7.20" height="7.10" fill="#adabd0"/>
<rect x="167.30" y="214.53" width="6.60" height="6.30" fill="#1f1f1f"/>
<rect x="182.50" y="214.53" width="6.40" height="6.30" fill="#1f1f1f"/>
<rect x="205.70" y="214.53" width="6.30" height="6.30" fill="#1f1f1f"/>
<rect x="213.20" y="214.53" width="6.40" height="6.30" fill="#1f1f1f"/>
<rect x="220.80" y="214.53" width="6.50" height="6.30" fill="#1f1f1f"/>
<rect x="236.90" y="213.97" width="22.10" height="7.30" fill="#1d1d1d"/>
<rect x="261.90" y="214.53" width="6.60" height="6.30" fill="#1f1f1f"/>
<rect x="279.30" y="213.97" width="22.60" height="7.30" fill="#1d1d1d"/>
<rect x="331.20" y="213.97" width="44.80" height="7.30" fill="#1d1d1d"/>
<rect x="410.40" y="214.22" width="3.72" height="7.70" fill="#72cfa3"/>
<rect x="446.90" y="213.62" width="531.90" height="8.35" fill="#787889"/>
<rect x="13.05" y="222.90" width="429.20" height="8.75" fill="#2d2d2d"/>
<rect x="14.75" y="224.20" width="6.50" height="6.30" fill="#1f1f1f"/>
<rect x="30.25" y="224.20" width="6.10" height="6.30" fill="#1f1f1f"/>
<rect x="37.90" y="224.20" width="6.10" height="6.30" fill="#1f1f1f"/>
<rect x="55.90" y="223.85" width="7.20" height="7.10" fill="#ab997e"/>
<rect x="167.30" y="224.20" width="6.60" height="6.30" fill="#1f1f1f"/>
<rect x="175.20" y="224.20" width="5.80" height="6.30" fill="#1f1f1f"/>
<rect x="182.50" y="224.20" width="6.40" height="6.30" fill="#1f1f1f"/>
<rect x="205.70" y="224.20" width="6.30" height="6.30" fill="#1f1f1f"/>
<rect x="213.20" y="224.20" width="6.40" height="6.30" fill="#1f1f1f"/>
<rect x="220.80" y="224.20" width="6.50" height="6.30" fill="#1f1f1f"/>
<rect x="236.90" y="223.65" width="22.10" height="7.30" fill="#1d1d1d"/>
<rect x="261.90" y="224.20" width="6.60" height="6.30" fill="#1f1f1f"/>
<rect x="279.30" y="223.65" width="22.60" height="7.30" fill="#1d1d1d"/>
<rect x="331.20" y="223.65" width="44.80" height="7.30" fill="#1d1d1d"/>
<rect x="410.40" y="223.90" width="0.75" height="7.70" fill="#72cfa3"/>
<rect x="446.90" y="223.30" width="531.90" height="8.35" fill="#756c5b"/>
<path d="M446.9 223.30 h2.2 l-2.2 2.2z" fill="#55503f"/>
<rect x="13.05" y="232.58" width="429.20" height="8.75" fill="#2d2d2d"/>
<rect x="14.75" y="233.88" width="6.50" height="6.30" fill="#1f1f1f"/>
<rect x="30.25" y="233.88" width="6.10" height="6.30" fill="#1f1f1f"/>
<rect x="37.90" y="233.88" width="6.10" height="6.30" fill="#1f1f1f"/>
<rect x="55.90" y="233.53" width="7.20" height="7.10" fill="#ab997e"/>
<rect x="167.30" y="233.88" width="6.60" height="6.30" fill="#1f1f1f"/>
<rect x="175.20" y="233.88" width="5.80" height="6.30" fill="#1f1f1f"/>
<rect x="182.50" y="233.88" width="6.40" height="6.30" fill="#1f1f1f"/>
<rect x="205.70" y="233.88" width="6.30" height="6.30" fill="#1f1f1f"/>
<rect x="213.20" y="233.88" width="6.40" height="6.30" fill="#1f1f1f"/>
<rect x="220.80" y="233.88" width="6.50" height="6.30" fill="#1f1f1f"/>
<rect x="236.90" y="233.33" width="22.10" height="7.30" fill="#1d1d1d"/>
<rect x="261.90" y="233.88" width="6.60" height="6.30" fill="#1f1f1f"/>
<rect x="279.30" y="233.33" width="22.60" height="7.30" fill="#1d1d1d"/>
<rect x="331.20" y="233.33" width="44.80" height="7.30" fill="#1d1d1d"/>
<rect x="410.40" y="233.58" width="0.75" height="7.70" fill="#72cfa3"/>
<rect x="446.90" y="232.98" width="531.90" height="8.35" fill="#756c5b"/>
<path d="M446.9 232.98 h2.2 l-2.2 2.2z" fill="#55503f"/>
<rect x="13.05" y="242.25" width="429.20" height="8.75" fill="#2d2d2d"/>
<rect x="14.75" y="243.55" width="6.50" height="6.30" fill="#1f1f1f"/>
<rect x="30.25" y="243.55" width="6.10" height="6.30" fill="#1f1f1f"/>
<rect x="37.90" y="243.55" width="6.10" height="6.30" fill="#1f1f1f"/>
<rect x="55.90" y="243.20" width="7.20" height="7.10" fill="#ab997e"/>
<rect x="167.30" y="243.55" width="6.60" height="6.30" fill="#1f1f1f"/>
<rect x="175.20" y="243.55" width="5.80" height="6.30" fill="#1f1f1f"/>
<rect x="182.50" y="243.55" width="6.40" height="6.30" fill="#1f1f1f"/>
<rect x="205.70" y="243.55" width="6.30" height="6.30" fill="#1f1f1f"/>
<rect x="213.20" y="243.55" width="6.40" height="6.30" fill="#1f1f1f"/>
<rect x="220.80" y="243.55" width="6.50" height="6.30" fill="#1f1f1f"/>
<rect x="236.90" y="243.00" width="22.10" height="7.30" fill="#1d1d1d"/>
<rect x="261.90" y="243.55" width="6.60" height="6.30" fill="#1f1f1f"/>
<rect x="279.30" y="243.00" width="22.60" height="7.30" fill="#1d1d1d"/>
<rect x="331.20" y="243.00" width="44.80" height="7.30" fill="#1d1d1d"/>
<rect x="410.40" y="243.25" width="0.75" height="7.70" fill="#72cfa3"/>
<rect x="446.90" y="242.65" width="531.90" height="8.35" fill="#756c5b"/>
<path d="M446.9 242.65 h2.2 l-2.2 2.2z" fill="#55503f"/>
<rect x="13.05" y="251.93" width="429.20" height="8.75" fill="#2d2d2d"/>
<rect x="14.75" y="253.23" width="6.50" height="6.30" fill="#1f1f1f"/>
<rect x="30.25" y="253.23" width="6.10" height="6.30" fill="#1f1f1f"/>
<rect x="37.90" y="253.23" width="6.10" height="6.30" fill="#1f1f1f"/>
<rect x="55.90" y="252.88" width="7.20" height="7.10" fill="#adabd0"/>
<rect x="167.30" y="253.23" width="6.60" height="6.30" fill="#1f1f1f"/>
<rect x="182.50" y="253.23" width="6.40" height="6.30" fill="#1f1f1f"/>
<rect x="205.70" y="253.23" width="6.30" height="6.30" fill="#1f1f1f"/>
<rect x="213.20" y="253.23" width="6.40" height="6.30" fill="#1f1f1f"/>
<rect x="220.80" y="253.23" width="6.50" height="6.30" fill="#1f1f1f"/>
<rect x="236.90" y="252.68" width="22.10" height="7.30" fill="#1d1d1d"/>
<rect x="261.90" y="253.23" width="6.60" height="6.30" fill="#1f1f1f"/>
<rect x="279.30" y="252.68" width="22.60" height="7.30" fill="#1d1d1d"/>
<rect x="331.20" y="252.68" width="44.80" height="7.30" fill="#1d1d1d"/>
<rect x="410.40" y="252.93" width="4.65" height="7.70" fill="#72cfa3"/>
<rect x="446.90" y="252.33" width="531.90" height="8.35" fill="#787889"/>
</svg>
<svg class="ic" style="left:49.50px;top:69.70px" width="4" height="5.5"><use href="#chev"/></svg>
<span class="t num" style="left:66.8px;top:68.10px">1</span>
<svg class="ic" style="left:82.00px;top:68.50px" width="7.2" height="8.2"><use href="#ps"/></svg>
<span class="t nm" style="left:92.2px;top:68.10px">レイヤー <b>0</b> のコピー <b>21</b></span>
<svg class="ic" style="left:167.30px;top:69.60px" width="6.6" height="6"><use href="#shy"/></svg>
<svg class="ic" style="left:182.50px;top:69.55px" width="6.4" height="6"><use href="#slash"/></svg>
<span class="t dt" style="left:239.6px;top:68.10px">通常</span>
<svg class="ic" style="left:253.30px;top:71.60px" width="4.2" height="2.8"><use href="#dn"/></svg>
<svg class="ic" style="left:270.50px;top:69.45px" width="6.8" height="6.8"><use href="#whip"/></svg>
<span class="t dt" style="left:282.2px;top:68.10px">マッ</span>
<svg class="ic" style="left:295.80px;top:71.60px" width="4.2" height="2.8"><use href="#dn"/></svg>
<svg class="ic" style="left:321.10px;top:69.45px" width="6.8" height="6.8"><use href="#whip"/></svg>
<span class="t dt" style="left:334.3px;top:68.10px">なし</span>
<svg class="ic" style="left:369.60px;top:71.60px" width="4.2" height="2.8"><use href="#dn"/></svg>
<svg class="ic" style="left:14.75px;top:79.22px" width="6.5" height="6"><use href="#eye"/></svg>
<svg class="ic" style="left:49.50px;top:79.37px" width="4" height="5.5"><use href="#chev"/></svg>
<span class="t num" style="left:66.8px;top:77.77px">2</span>
<svg class="ic" style="left:82.00px;top:78.17px" width="7.2" height="8.2"><use href="#ps"/></svg>
<span class="t nm" style="left:92.2px;top:77.77px">いえ<b>1</b></span>
<svg class="ic" style="left:167.30px;top:79.27px" width="6.6" height="6"><use href="#shy"/></svg>
<svg class="ic" style="left:182.50px;top:79.22px" width="6.4" height="6"><use href="#slash"/></svg>
<span class="t dt" style="left:239.6px;top:77.77px">通常</span>
<svg class="ic" style="left:253.30px;top:81.27px" width="4.2" height="2.8"><use href="#dn"/></svg>
<svg class="ic" style="left:270.50px;top:79.12px" width="6.8" height="6.8"><use href="#whip"/></svg>
<span class="t dt" style="left:282.2px;top:77.77px">マッ</span>
<svg class="ic" style="left:295.80px;top:81.27px" width="4.2" height="2.8"><use href="#dn"/></svg>
<svg class="ic" style="left:321.10px;top:79.12px" width="6.8" height="6.8"><use href="#whip"/></svg>
<span class="t dt" style="left:334.3px;top:77.77px">なし</span>
<svg class="ic" style="left:369.60px;top:81.27px" width="4.2" height="2.8"><use href="#dn"/></svg>
<span class="t rt" style="right:595.20px;top:77.77px;color:#7bd9ad">15ms</span>
<svg class="ic" style="left:14.75px;top:88.90px" width="6.5" height="6"><use href="#eye"/></svg>
<svg class="ic" style="left:49.50px;top:89.05px" width="4" height="5.5"><use href="#chev"/></svg>
<span class="t num" style="left:66.8px;top:87.45px">3</span>
<svg class="ic" style="left:82.00px;top:87.85px" width="7.2" height="8.2"><use href="#ps"/></svg>
<span class="t nm" style="left:92.2px;top:87.45px">ほし布<b>1</b></span>
<svg class="ic" style="left:167.30px;top:88.95px" width="6.6" height="6"><use href="#shy"/></svg>
<svg class="ic" style="left:182.50px;top:88.90px" width="6.4" height="6"><use href="#slash"/></svg>
<span class="t dt" style="left:239.6px;top:87.45px">通常</span>
<svg class="ic" style="left:253.30px;top:90.95px" width="4.2" height="2.8"><use href="#dn"/></svg>
<svg class="ic" style="left:270.50px;top:88.80px" width="6.8" height="6.8"><use href="#whip"/></svg>
<span class="t dt" style="left:282.2px;top:87.45px">マッ</span>
<svg class="ic" style="left:295.80px;top:90.95px" width="4.2" height="2.8"><use href="#dn"/></svg>
<svg class="ic" style="left:321.10px;top:88.80px" width="6.8" height="6.8"><use href="#whip"/></svg>
<span class="t dt" style="left:334.3px;top:87.45px">なし</span>
<svg class="ic" style="left:369.60px;top:90.95px" width="4.2" height="2.8"><use href="#dn"/></svg>
<span class="t rt" style="right:595.20px;top:87.45px;color:#7bd9ad">15ms</span>
<svg class="ic" style="left:14.75px;top:98.58px" width="6.5" height="6"><use href="#eye"/></svg>
<svg class="ic" style="left:49.50px;top:98.72px" width="4" height="5.5"><use href="#chev"/></svg>
<span class="t num" style="left:66.8px;top:97.12px">4</span>
<svg class="ic" style="left:82.00px;top:97.53px" width="7.2" height="8.2"><use href="#ps"/></svg>
<span class="t nm" style="left:92.2px;top:97.12px">旅人</span>
<svg class="ic" style="left:167.30px;top:98.62px" width="6.6" height="6"><use href="#shy"/></svg>
<svg class="ic" style="left:182.50px;top:98.58px" width="6.4" height="6"><use href="#slash"/></svg>
<span class="t dt" style="left:239.6px;top:97.12px">通常</span>
<svg class="ic" style="left:253.30px;top:100.62px" width="4.2" height="2.8"><use href="#dn"/></svg>
<svg class="ic" style="left:270.50px;top:98.47px" width="6.8" height="6.8"><use href="#whip"/></svg>
<span class="t dt" style="left:282.2px;top:97.12px">マッ</span>
<svg class="ic" style="left:295.80px;top:100.62px" width="4.2" height="2.8"><use href="#dn"/></svg>
<svg class="ic" style="left:321.10px;top:98.47px" width="6.8" height="6.8"><use href="#whip"/></svg>
<span class="t dt" style="left:334.3px;top:97.12px">なし</span>
<svg class="ic" style="left:369.60px;top:100.62px" width="4.2" height="2.8"><use href="#dn"/></svg>
<span class="t rt" style="right:595.20px;top:97.12px;color:#7bd9ad">15ms</span>
<svg class="ic" style="left:14.75px;top:108.25px" width="6.5" height="6"><use href="#eye"/></svg>
<svg class="ic" style="left:49.50px;top:108.40px" width="4" height="5.5"><use href="#chev"/></svg>
<span class="t num" style="left:66.8px;top:106.80px">5</span>
<svg class="ic" style="left:82.00px;top:107.20px" width="7.2" height="8.2"><use href="#ps"/></svg>
<span class="t nm" style="left:92.2px;top:106.80px">旅人<b>2</b></span>
<svg class="ic" style="left:167.30px;top:108.30px" width="6.6" height="6"><use href="#shy"/></svg>
<svg class="ic" style="left:182.50px;top:108.25px" width="6.4" height="6"><use href="#slash"/></svg>
<span class="t dt" style="left:239.6px;top:106.80px">通常</span>
<svg class="ic" style="left:253.30px;top:110.30px" width="4.2" height="2.8"><use href="#dn"/></svg>
<svg class="ic" style="left:270.50px;top:108.15px" width="6.8" height="6.8"><use href="#whip"/></svg>
<span class="t dt" style="left:282.2px;top:106.80px">マッ</span>
<svg class="ic" style="left:295.80px;top:110.30px" width="4.2" height="2.8"><use href="#dn"/></svg>
<svg class="ic" style="left:321.10px;top:108.15px" width="6.8" height="6.8"><use href="#whip"/></svg>
<span class="t dt" style="left:334.3px;top:106.80px">なし</span>
<svg class="ic" style="left:369.60px;top:110.30px" width="4.2" height="2.8"><use href="#dn"/></svg>
<span class="t rt" style="right:595.20px;top:106.80px;color:#7bd9ad">16ms</span>
<svg class="ic" style="left:14.75px;top:117.92px" width="6.5" height="6"><use href="#eye"/></svg>
<svg class="ic" style="left:49.50px;top:118.07px" width="4" height="5.5"><use href="#chev"/></svg>
<span class="t num" style="left:66.8px;top:116.47px">6</span>
<svg class="ic" style="left:81.00px;top:116.88px" width="9.2" height="8.2"><use href="#pc"/></svg>
<span class="t nm" style="left:92.2px;top:116.47px">[布叩き<b>3</b>]</span>
<svg class="ic" style="left:167.30px;top:117.97px" width="6.6" height="6"><use href="#shy"/></svg>
<svg class="ic" style="left:182.50px;top:117.92px" width="6.4" height="6"><use href="#slash"/></svg>
<span class="t dt" style="left:239.6px;top:116.47px">通常</span>
<svg class="ic" style="left:253.30px;top:119.97px" width="4.2" height="2.8"><use href="#dn"/></svg>
<svg class="ic" style="left:270.50px;top:117.82px" width="6.8" height="6.8"><use href="#whip"/></svg>
<span class="t dt" style="left:282.2px;top:116.47px">マッ</span>
<svg class="ic" style="left:295.80px;top:119.97px" width="4.2" height="2.8"><use href="#dn"/></svg>
<svg class="ic" style="left:321.10px;top:117.82px" width="6.8" height="6.8"><use href="#whip"/></svg>
<span class="t dt" style="left:334.3px;top:116.47px">なし</span>
<svg class="ic" style="left:369.60px;top:119.97px" width="4.2" height="2.8"><use href="#dn"/></svg>
<span class="t rt" style="right:595.20px;top:116.47px;color:#7bd9ad">5ms</span>
<svg class="ic" style="left:14.75px;top:127.60px" width="6.5" height="6"><use href="#eye"/></svg>
<svg class="ic" style="left:49.50px;top:127.75px" width="4" height="5.5"><use href="#chev"/></svg>
<span class="t num" style="left:66.8px;top:126.15px">7</span>
<svg class="ic" style="left:81.00px;top:126.55px" width="9.2" height="8.2"><use href="#pc"/></svg>
<span class="t nm" style="left:92.2px;top:126.15px">[布叩き<b>1</b>]</span>
<svg class="ic" style="left:167.30px;top:127.65px" width="6.6" height="6"><use href="#shy"/></svg>
<svg class="ic" style="left:182.50px;top:127.60px" width="6.4" height="6"><use href="#slash"/></svg>
<span class="t dt" style="left:239.6px;top:126.15px">通常</span>
<svg class="ic" style="left:253.30px;top:129.65px" width="4.2" height="2.8"><use href="#dn"/></svg>
<svg class="ic" style="left:270.50px;top:127.50px" width="6.8" height="6.8"><use href="#whip"/></svg>
<span class="t dt" style="left:282.2px;top:126.15px">マッ</span>
<svg class="ic" style="left:295.80px;top:129.65px" width="4.2" height="2.8"><use href="#dn"/></svg>
<svg class="ic" style="left:321.10px;top:127.50px" width="6.8" height="6.8"><use href="#whip"/></svg>
<span class="t dt" style="left:334.3px;top:126.15px">なし</span>
<svg class="ic" style="left:369.60px;top:129.65px" width="4.2" height="2.8"><use href="#dn"/></svg>
<span class="t rt" style="right:595.20px;top:126.15px;color:#7bd9ad">1ms</span>
<svg class="ic" style="left:14.75px;top:137.28px" width="6.5" height="6"><use href="#eye"/></svg>
<svg class="ic" style="left:49.50px;top:137.43px" width="4" height="5.5"><use href="#chev"/></svg>
<span class="t num" style="left:66.8px;top:135.82px">8</span>
<svg class="ic" style="left:81.00px;top:136.22px" width="9.2" height="8.2"><use href="#pc"/></svg>
<span class="t nm" style="left:92.2px;top:135.82px">[布叩き<b>2</b>]</span>
<svg class="ic" style="left:167.30px;top:137.32px" width="6.6" height="6"><use href="#shy"/></svg>
<svg class="ic" style="left:182.50px;top:137.28px" width="6.4" height="6"><use href="#slash"/></svg>
<span class="t dt" style="left:239.6px;top:135.82px">通常</span>
<svg class="ic" style="left:253.30px;top:139.32px" width="4.2" height="2.8"><use href="#dn"/></svg>
<svg class="ic" style="left:270.50px;top:137.17px" width="6.8" height="6.8"><use href="#whip"/></svg>
<span class="t dt" style="left:282.2px;top:135.82px">マッ</span>
<svg class="ic" style="left:295.80px;top:139.32px" width="4.2" height="2.8"><use href="#dn"/></svg>
<svg class="ic" style="left:321.10px;top:137.17px" width="6.8" height="6.8"><use href="#whip"/></svg>
<span class="t dt" style="left:334.3px;top:135.82px">なし</span>
<svg class="ic" style="left:369.60px;top:139.32px" width="4.2" height="2.8"><use href="#dn"/></svg>
<span class="t rt" style="right:595.20px;top:135.82px;color:#7bd9ad">6ms</span>
<svg class="ic" style="left:14.75px;top:146.95px" width="6.5" height="6"><use href="#eye"/></svg>
<svg class="ic" style="left:49.50px;top:147.10px" width="4" height="5.5"><use href="#chev"/></svg>
<span class="t num" style="left:66.8px;top:145.50px">9</span>
<svg class="ic" style="left:81.00px;top:145.90px" width="9.2" height="8.2"><use href="#pc"/></svg>
<span class="t nm" style="left:92.2px;top:145.50px">[布叩き<b>5</b>]</span>
<svg class="ic" style="left:167.30px;top:147.00px" width="6.6" height="6"><use href="#shy"/></svg>
<svg class="ic" style="left:182.50px;top:146.95px" width="6.4" height="6"><use href="#slash"/></svg>
<span class="t dt" style="left:239.6px;top:145.50px">通常</span>
<svg class="ic" style="left:253.30px;top:149.00px" width="4.2" height="2.8"><use href="#dn"/></svg>
<svg class="ic" style="left:270.50px;top:146.85px" width="6.8" height="6.8"><use href="#whip"/></svg>
<span class="t dt" style="left:282.2px;top:145.50px">マッ</span>
<svg class="ic" style="left:295.80px;top:149.00px" width="4.2" height="2.8"><use href="#dn"/></svg>
<svg class="ic" style="left:321.10px;top:146.85px" width="6.8" height="6.8"><use href="#whip"/></svg>
<span class="t dt" style="left:334.3px;top:145.50px">なし</span>
<svg class="ic" style="left:369.60px;top:149.00px" width="4.2" height="2.8"><use href="#dn"/></svg>
<span class="t rt" style="right:595.20px;top:145.50px;color:#7bd9ad">1ms</span>
<svg class="ic" style="left:14.75px;top:156.63px" width="6.5" height="6"><use href="#eye"/></svg>
<svg class="ic" style="left:49.50px;top:156.78px" width="4" height="5.5"><use href="#chev"/></svg>
<span class="t num" style="left:66.8px;top:155.18px">10</span>
<svg class="ic" style="left:81.00px;top:155.58px" width="9.2" height="8.2"><use href="#pc"/></svg>
<span class="t nm" style="left:92.2px;top:155.18px">[布叩き<b>6</b>]</span>
<svg class="ic" style="left:167.30px;top:156.68px" width="6.6" height="6"><use href="#shy"/></svg>
<svg class="ic" style="left:182.50px;top:156.63px" width="6.4" height="6"><use href="#slash"/></svg>
<span class="t dt" style="left:239.6px;top:155.18px">通常</span>
<svg class="ic" style="left:253.30px;top:158.68px" width="4.2" height="2.8"><use href="#dn"/></svg>
<svg class="ic" style="left:270.50px;top:156.53px" width="6.8" height="6.8"><use href="#whip"/></svg>
<span class="t dt" style="left:282.2px;top:155.18px">マッ</span>
<svg class="ic" style="left:295.80px;top:158.68px" width="4.2" height="2.8"><use href="#dn"/></svg>
<svg class="ic" style="left:321.10px;top:156.53px" width="6.8" height="6.8"><use href="#whip"/></svg>
<span class="t dt" style="left:334.3px;top:155.18px">なし</span>
<svg class="ic" style="left:369.60px;top:158.68px" width="4.2" height="2.8"><use href="#dn"/></svg>
<span class="t rt" style="right:595.20px;top:155.18px;color:#c0a363">149ms</span>
<svg class="ic" style="left:14.75px;top:166.30px" width="6.5" height="6"><use href="#eye"/></svg>
<svg class="ic" style="left:49.50px;top:166.45px" width="4" height="5.5"><use href="#chev"/></svg>
<span class="t num" style="left:66.8px;top:164.85px">11</span>
<svg class="ic" style="left:81.00px;top:165.25px" width="9.2" height="8.2"><use href="#pc"/></svg>
<span class="t nm" style="left:92.2px;top:164.85px">[布叩き<b>4</b>]</span>
<svg class="ic" style="left:167.30px;top:166.35px" width="6.6" height="6"><use href="#shy"/></svg>
<svg class="ic" style="left:182.50px;top:166.30px" width="6.4" height="6"><use href="#slash"/></svg>
<svg class="ic" style="left:190.30px;top:166.15px" width="6.4" height="6"><use href="#fx"/></svg>
<span class="t dt" style="left:239.6px;top:164.85px">通常</span>
<svg class="ic" style="left:253.30px;top:168.35px" width="4.2" height="2.8"><use href="#dn"/></svg>
<svg class="ic" style="left:270.50px;top:166.20px" width="6.8" height="6.8"><use href="#whip"/></svg>
<span class="t dt" style="left:282.2px;top:164.85px">マッ</span>
<svg class="ic" style="left:295.80px;top:168.35px" width="4.2" height="2.8"><use href="#dn"/></svg>
<svg class="ic" style="left:321.10px;top:166.20px" width="6.8" height="6.8"><use href="#whip"/></svg>
<span class="t dt" style="left:334.3px;top:164.85px">なし</span>
<svg class="ic" style="left:369.60px;top:168.35px" width="4.2" height="2.8"><use href="#dn"/></svg>
<span class="t rt" style="right:595.20px;top:164.85px;color:#7bd9ad">1ms</span>
<span class="t rt" style="left:406.3px;top:164.55px;color:#d0d0d0">*</span>
<svg class="ic" style="left:14.75px;top:175.98px" width="6.5" height="6"><use href="#eye"/></svg>
<svg class="ic" style="left:49.50px;top:176.13px" width="4" height="5.5"><use href="#chev"/></svg>
<span class="t num" style="left:66.8px;top:174.53px">12</span>
<svg class="ic" style="left:81.00px;top:174.93px" width="9.2" height="8.2"><use href="#pc"/></svg>
<span class="t nm" style="left:92.2px;top:174.53px">[水洗い]</span>
<svg class="ic" style="left:167.30px;top:176.03px" width="6.6" height="6"><use href="#shy"/></svg>
<svg class="ic" style="left:182.50px;top:175.98px" width="6.4" height="6"><use href="#slash"/></svg>
<span class="t dt" style="left:239.6px;top:174.53px">通常</span>
<svg class="ic" style="left:253.30px;top:178.03px" width="4.2" height="2.8"><use href="#dn"/></svg>
<svg class="ic" style="left:270.50px;top:175.88px" width="6.8" height="6.8"><use href="#whip"/></svg>
<span class="t dt" style="left:282.2px;top:174.53px">マッ</span>
<svg class="ic" style="left:295.80px;top:178.03px" width="4.2" height="2.8"><use href="#dn"/></svg>
<svg class="ic" style="left:321.10px;top:175.88px" width="6.8" height="6.8"><use href="#whip"/></svg>
<span class="t dt" style="left:334.3px;top:174.53px">なし</span>
<svg class="ic" style="left:369.60px;top:178.03px" width="4.2" height="2.8"><use href="#dn"/></svg>
<span class="t rt" style="right:595.20px;top:174.53px;color:#7bd9ad">8ms</span>
<svg class="ic" style="left:14.75px;top:185.65px" width="6.5" height="6"><use href="#eye"/></svg>
<svg class="ic" style="left:49.50px;top:185.80px" width="4" height="5.5"><use href="#chev"/></svg>
<span class="t num" style="left:66.8px;top:184.20px">13</span>
<svg class="ic" style="left:82.00px;top:184.60px" width="7.2" height="8.2"><use href="#ps"/></svg>
<span class="t nm" style="left:92.2px;top:184.20px">つぼ</span>
<svg class="ic" style="left:167.30px;top:185.70px" width="6.6" height="6"><use href="#shy"/></svg>
<svg class="ic" style="left:182.50px;top:185.65px" width="6.4" height="6"><use href="#slash"/></svg>
<span class="t dt" style="left:239.6px;top:184.20px">通常</span>
<svg class="ic" style="left:253.30px;top:187.70px" width="4.2" height="2.8"><use href="#dn"/></svg>
<svg class="ic" style="left:270.50px;top:185.55px" width="6.8" height="6.8"><use href="#whip"/></svg>
<span class="t dt" style="left:282.2px;top:184.20px">マッ</span>
<svg class="ic" style="left:295.80px;top:187.70px" width="4.2" height="2.8"><use href="#dn"/></svg>
<svg class="ic" style="left:321.10px;top:185.55px" width="6.8" height="6.8"><use href="#whip"/></svg>
<span class="t dt" style="left:334.3px;top:184.20px">なし</span>
<svg class="ic" style="left:369.60px;top:187.70px" width="4.2" height="2.8"><use href="#dn"/></svg>
<span class="t rt" style="right:595.20px;top:184.20px;color:#7bd9ad">18ms</span>
<svg class="ic" style="left:14.75px;top:195.33px" width="6.5" height="6"><use href="#eye"/></svg>
<svg class="ic" style="left:49.50px;top:195.48px" width="4" height="5.5"><use href="#chev"/></svg>
<span class="t num" style="left:66.8px;top:193.88px">14</span>
<svg class="ic" style="left:82.00px;top:194.28px" width="7.2" height="8.2"><use href="#ps"/></svg>
<span class="t nm" style="left:92.2px;top:193.88px">布<b>2</b></span>
<svg class="ic" style="left:167.30px;top:195.38px" width="6.6" height="6"><use href="#shy"/></svg>
<svg class="ic" style="left:182.50px;top:195.33px" width="6.4" height="6"><use href="#slash"/></svg>
<span class="t dt" style="left:239.6px;top:193.88px">通常</span>
<svg class="ic" style="left:253.30px;top:197.38px" width="4.2" height="2.8"><use href="#dn"/></svg>
<svg class="ic" style="left:270.50px;top:195.22px" width="6.8" height="6.8"><use href="#whip"/></svg>
<span class="t dt" style="left:282.2px;top:193.88px">マッ</span>
<svg class="ic" style="left:295.80px;top:197.38px" width="4.2" height="2.8"><use href="#dn"/></svg>
<svg class="ic" style="left:321.10px;top:195.22px" width="6.8" height="6.8"><use href="#whip"/></svg>
<span class="t dt" style="left:334.3px;top:193.88px">なし</span>
<svg class="ic" style="left:369.60px;top:197.38px" width="4.2" height="2.8"><use href="#dn"/></svg>
<span class="t rt" style="right:595.20px;top:193.88px;color:#7bd9ad">20ms</span>
<svg class="ic" style="left:14.75px;top:205.00px" width="6.5" height="6"><use href="#eye"/></svg>
<svg class="ic" style="left:49.50px;top:205.15px" width="4" height="5.5"><use href="#chev"/></svg>
<span class="t num" style="left:66.8px;top:203.55px">15</span>
<svg class="ic" style="left:82.00px;top:203.95px" width="7.2" height="8.2"><use href="#ps"/></svg>
<span class="t nm" style="left:92.2px;top:203.55px">布<b>1</b></span>
<svg class="ic" style="left:167.30px;top:205.05px" width="6.6" height="6"><use href="#shy"/></svg>
<svg class="ic" style="left:182.50px;top:205.00px" width="6.4" height="6"><use href="#slash"/></svg>
<span class="t dt" style="left:239.6px;top:203.55px">通常</span>
<svg class="ic" style="left:253.30px;top:207.05px" width="4.2" height="2.8"><use href="#dn"/></svg>
<svg class="ic" style="left:270.50px;top:204.90px" width="6.8" height="6.8"><use href="#whip"/></svg>
<span class="t dt" style="left:282.2px;top:203.55px">マッ</span>
<svg class="ic" style="left:295.80px;top:207.05px" width="4.2" height="2.8"><use href="#dn"/></svg>
<svg class="ic" style="left:321.10px;top:204.90px" width="6.8" height="6.8"><use href="#whip"/></svg>
<span class="t dt" style="left:334.3px;top:203.55px">なし</span>
<svg class="ic" style="left:369.60px;top:207.05px" width="4.2" height="2.8"><use href="#dn"/></svg>
<span class="t rt" style="right:595.20px;top:203.55px;color:#7bd9ad">19ms</span>
<svg class="ic" style="left:14.75px;top:214.68px" width="6.5" height="6"><use href="#eye"/></svg>
<svg class="ic" style="left:49.50px;top:214.83px" width="4" height="5.5"><use href="#chev"/></svg>
<span class="t num" style="left:66.8px;top:213.22px">16</span>
<svg class="ic" style="left:82.00px;top:213.62px" width="7.2" height="8.2"><use href="#ps"/></svg>
<span class="t nm" style="left:92.2px;top:213.22px">小屋</span>
<svg class="ic" style="left:167.30px;top:214.72px" width="6.6" height="6"><use href="#shy"/></svg>
<svg class="ic" style="left:182.50px;top:214.68px" width="6.4" height="6"><use href="#slash"/></svg>
<span class="t dt" style="left:239.6px;top:213.22px">通常</span>
<svg class="ic" style="left:253.30px;top:216.72px" width="4.2" height="2.8"><use href="#dn"/></svg>
<svg class="ic" style="left:270.50px;top:214.57px" width="6.8" height="6.8"><use href="#whip"/></svg>
<span class="t dt" style="left:282.2px;top:213.22px">マッ</span>
<svg class="ic" style="left:295.80px;top:216.72px" width="4.2" height="2.8"><use href="#dn"/></svg>
<svg class="ic" style="left:321.10px;top:214.57px" width="6.8" height="6.8"><use href="#whip"/></svg>
<span class="t dt" style="left:334.3px;top:213.22px">なし</span>
<svg class="ic" style="left:369.60px;top:216.72px" width="4.2" height="2.8"><use href="#dn"/></svg>
<span class="t rt" style="right:595.20px;top:213.22px;color:#7bd9ad">24ms</span>
<svg class="ic" style="left:14.75px;top:224.35px" width="6.5" height="6"><use href="#eye"/></svg>
<svg class="ic" style="left:49.50px;top:224.50px" width="4" height="5.5"><use href="#chev"/></svg>
<span class="t num" style="left:66.8px;top:222.90px">17</span>
<svg class="ic" style="left:81.00px;top:223.30px" width="9.2" height="8.2"><use href="#pc"/></svg>
<span class="t nm" style="left:92.2px;top:222.90px">[通行人<b>2</b>]</span>
<svg class="ic" style="left:167.30px;top:224.40px" width="6.6" height="6"><use href="#shy"/></svg>
<svg class="ic" style="left:182.50px;top:224.35px" width="6.4" height="6"><use href="#slash"/></svg>
<span class="t dt" style="left:239.6px;top:222.90px">通常</span>
<svg class="ic" style="left:253.30px;top:226.40px" width="4.2" height="2.8"><use href="#dn"/></svg>
<svg class="ic" style="left:270.50px;top:224.25px" width="6.8" height="6.8"><use href="#whip"/></svg>
<span class="t dt" style="left:282.2px;top:222.90px">マッ</span>
<svg class="ic" style="left:295.80px;top:226.40px" width="4.2" height="2.8"><use href="#dn"/></svg>
<svg class="ic" style="left:321.10px;top:224.25px" width="6.8" height="6.8"><use href="#whip"/></svg>
<span class="t dt" style="left:334.3px;top:222.90px">なし</span>
<svg class="ic" style="left:369.60px;top:226.40px" width="4.2" height="2.8"><use href="#dn"/></svg>
<span class="t rt" style="right:595.20px;top:222.90px;color:#7bd9ad">1ms</span>
<svg class="ic" style="left:14.75px;top:234.03px" width="6.5" height="6"><use href="#eye"/></svg>
<svg class="ic" style="left:49.50px;top:234.18px" width="4" height="5.5"><use href="#chev"/></svg>
<span class="t num" style="left:66.8px;top:232.58px">18</span>
<svg class="ic" style="left:81.00px;top:232.98px" width="9.2" height="8.2"><use href="#pc"/></svg>
<span class="t nm" style="left:92.2px;top:232.58px">[通行人<b>3</b>]</span>
<svg class="ic" style="left:167.30px;top:234.08px" width="6.6" height="6"><use href="#shy"/></svg>
<svg class="ic" style="left:182.50px;top:234.03px" width="6.4" height="6"><use href="#slash"/></svg>
<span class="t dt" style="left:239.6px;top:232.58px">通常</span>
<svg class="ic" style="left:253.30px;top:236.08px" width="4.2" height="2.8"><use href="#dn"/></svg>
<svg class="ic" style="left:270.50px;top:233.93px" width="6.8" height="6.8"><use href="#whip"/></svg>
<span class="t dt" style="left:282.2px;top:232.58px">マッ</span>
<svg class="ic" style="left:295.80px;top:236.08px" width="4.2" height="2.8"><use href="#dn"/></svg>
<svg class="ic" style="left:321.10px;top:233.93px" width="6.8" height="6.8"><use href="#whip"/></svg>
<span class="t dt" style="left:334.3px;top:232.58px">なし</span>
<svg class="ic" style="left:369.60px;top:236.08px" width="4.2" height="2.8"><use href="#dn"/></svg>
<span class="t rt" style="right:595.20px;top:232.58px;color:#7bd9ad">1ms</span>
<svg class="ic" style="left:14.75px;top:243.70px" width="6.5" height="6"><use href="#eye"/></svg>
<svg class="ic" style="left:49.50px;top:243.85px" width="4" height="5.5"><use href="#chev"/></svg>
<span class="t num" style="left:66.8px;top:242.25px">19</span>
<svg class="ic" style="left:81.00px;top:242.65px" width="9.2" height="8.2"><use href="#pc"/></svg>
<span class="t nm" style="left:92.2px;top:242.25px">[通行人<b>1</b>]</span>
<svg class="ic" style="left:167.30px;top:243.75px" width="6.6" height="6"><use href="#shy"/></svg>
<svg class="ic" style="left:182.50px;top:243.70px" width="6.4" height="6"><use href="#slash"/></svg>
<span class="t dt" style="left:239.6px;top:242.25px">通常</span>
<svg class="ic" style="left:253.30px;top:245.75px" width="4.2" height="2.8"><use href="#dn"/></svg>
<svg class="ic" style="left:270.50px;top:243.60px" width="6.8" height="6.8"><use href="#whip"/></svg>
<span class="t dt" style="left:282.2px;top:242.25px">マッ</span>
<svg class="ic" style="left:295.80px;top:245.75px" width="4.2" height="2.8"><use href="#dn"/></svg>
<svg class="ic" style="left:321.10px;top:243.60px" width="6.8" height="6.8"><use href="#whip"/></svg>
<span class="t dt" style="left:334.3px;top:242.25px">なし</span>
<svg class="ic" style="left:369.60px;top:245.75px" width="4.2" height="2.8"><use href="#dn"/></svg>
<span class="t rt" style="right:595.20px;top:242.25px;color:#7bd9ad">1ms</span>
<svg class="ic" style="left:14.75px;top:253.38px" width="6.5" height="6"><use href="#eye"/></svg>
<svg class="ic" style="left:49.50px;top:253.53px" width="4" height="5.5"><use href="#chev"/></svg>
<span class="t num" style="left:66.8px;top:251.93px">20</span>
<svg class="ic" style="left:82.00px;top:252.33px" width="7.2" height="8.2"><use href="#ps"/></svg>
<span class="t nm" style="left:92.2px;top:251.93px">物干し</span>
<svg class="ic" style="left:167.30px;top:253.43px" width="6.6" height="6"><use href="#shy"/></svg>
<svg class="ic" style="left:182.50px;top:253.38px" width="6.4" height="6"><use href="#slash"/></svg>
<span class="t dt" style="left:239.6px;top:251.93px">通常</span>
<svg class="ic" style="left:253.30px;top:255.43px" width="4.2" height="2.8"><use href="#dn"/></svg>
<svg class="ic" style="left:270.50px;top:253.28px" width="6.8" height="6.8"><use href="#whip"/></svg>
<span class="t dt" style="left:282.2px;top:251.93px">マッ</span>
<svg class="ic" style="left:295.80px;top:255.43px" width="4.2" height="2.8"><use href="#dn"/></svg>
<svg class="ic" style="left:321.10px;top:253.28px" width="6.8" height="6.8"><use href="#whip"/></svg>
<span class="t dt" style="left:334.3px;top:251.93px">なし</span>
<svg class="ic" style="left:369.60px;top:255.43px" width="4.2" height="2.8"><use href="#dn"/></svg>
<span class="t rt" style="right:595.20px;top:251.93px;color:#7bd9ad">30ms</span>
<svg class="ly" width="1000" height="560" style="left:0;top:0">
<rect x="446.25" y="56" width="1.3" height="480.3" fill="#4682e1" fill-opacity="0.5"/>
<path d="M446.5 58 V65.3 H444.9 A1.6 1.6 0 0 1 443.3 63.7 V59.6 A1.6 1.6 0 0 1 444.9 58Z" fill="#3f8fe8"/>
</svg>
<svg class="ic" style="left:443.1px;top:50.4px" width="7.2" height="7.4"><path d="M0.2 0.3 H6.9 V3 L3.55 7.1 L0.2 3Z" fill="#4a95ee"/><path d="M2.3 1.3 L3.55 3 L4.8 1.3" fill="none" stroke="#234a80" stroke-width="0.55"/></svg>
</div></body></html>
